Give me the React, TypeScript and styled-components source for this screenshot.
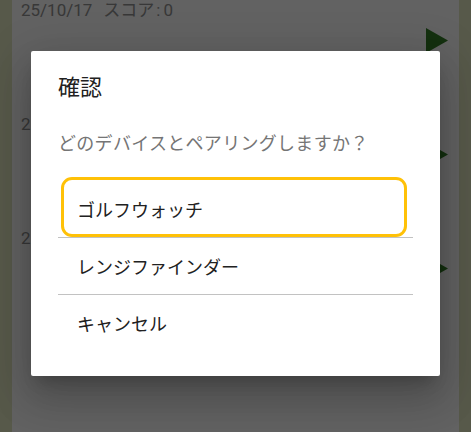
import React from "react";
import styled, { createGlobalStyle } from "styled-components";

const GlobalStyle = createGlobalStyle`
  html, body {
    margin: 0;
    padding: 0;
    background: #d9deb9;
    font-family: "Roboto", "Noto Sans CJK JP", sans-serif;
  }
  * {
    box-sizing: border-box;
  }
`;

interface HistoryRow {
  date: string;
  score: number;
}

const rows: HistoryRow[] = [
  { date: "25/10/17", score: 0 },
  { date: "25/10/17", score: 0 },
  { date: "25/10/17", score: 0 },
];

const options = ["ゴルフウォッチ", "レンジファインダー", "キャンセル"];

const PlayIcon = () => (
  <svg width="22" height="25" viewBox="0 0 22 25">
    <polygon points="0,0 22,12.5 0,25" fill="#327826" />
  </svg>
);

export default function App() {
  return (
    <>
      <GlobalStyle />
      <Screen>
        <ListPanel>
          {rows.map((row, i) => (
            <Row key={i}>
              <RowText>
                {row.date}
                <Gap />
                スコア<Colon>:</Colon>
                {row.score}
              </RowText>
              <RowActions>
                <PlayIcon />
              </RowActions>
            </Row>
          ))}
        </ListPanel>

        <Scrim>
          <Dialog role="dialog">
            <Title>確認</Title>
            <Message>どのデバイスとペアリングしますか？</Message>
            <OptionList>
              {options.map((label, i) => (
                <React.Fragment key={label}>
                  {i > 0 && <Divider />}
                  <Option $focused={i === 0}>{label}</Option>
                </React.Fragment>
              ))}
            </OptionList>
          </Dialog>
        </Scrim>
      </Screen>
    </>
  );
}

const Screen = styled.div`
  position: relative;
  width: 471px;
  height: 432px;
  overflow: hidden;
  background: #d9deb9;
  padding: 0 12px;
`;

const ListPanel = styled.div`
  height: 100%;
  background: #f5f5f5;
  display: flex;
  flex-direction: column;
`;

const Row = styled.div`
  height: 114px;
  padding: 0 11px 0 9px;
  display: flex;
  flex-direction: column;
`;

const RowText = styled.div`
  font-size: 17px;
  line-height: 20px;
  color: #8c8c8c;
  display: flex;
  align-items: center;
`;

const Gap = styled.span`
  display: inline-block;
  width: 11px;
`;

const Colon = styled.span`
  margin: 0 3px 0 2px;
`;

const RowActions = styled.div`
  display: flex;
  justify-content: flex-end;
  margin-top: 8px;
`;

const Scrim = styled.div`
  position: absolute;
  inset: 0;
  background: rgba(0, 0, 0, 0.6);
  display: flex;
  justify-content: center;
  align-items: flex-start;
  padding-top: 51px;
`;

const Dialog = styled.div`
  width: 409px;
  height: 325px;
  background: #ffffff;
  border-radius: 2px;
  padding: 22px 27px 25px;
  display: flex;
  flex-direction: column;
  box-shadow: 0 11px 15px -7px rgba(0, 0, 0, 0.2),
    0 24px 38px 3px rgba(0, 0, 0, 0.14), 0 9px 46px 8px rgba(0, 0, 0, 0.12);
`;

const Title = styled.h2`
  margin: 0;
  font-size: 22px;
  font-weight: 400;
  line-height: 30px;
  color: #212121;
`;

const Message = styled.p`
  margin: 28px 0 0;
  font-size: 18px;
  line-height: 26px;
  letter-spacing: 0.3px;
  color: #757575;
`;

const OptionList = styled.div`
  margin-top: 24px;
  display: flex;
  flex-direction: column;
`;

const Option = styled.div<{ $focused?: boolean }>`
  position: relative;
  height: 56px;
  padding-left: 19px;
  display: flex;
  align-items: center;
  font-size: 18px;
  color: #212121;

  ${({ $focused }) =>
    $focused &&
    `
    &::after {
      content: "";
      position: absolute;
      top: -4px;
      bottom: 0;
      left: 3px;
      right: 6px;
      border: 3px solid #ffc107;
      border-radius: 11px;
    }
  `}
`;

const Divider = styled.div`
  height: 1px;
  background: #c2c2c2;
`;
